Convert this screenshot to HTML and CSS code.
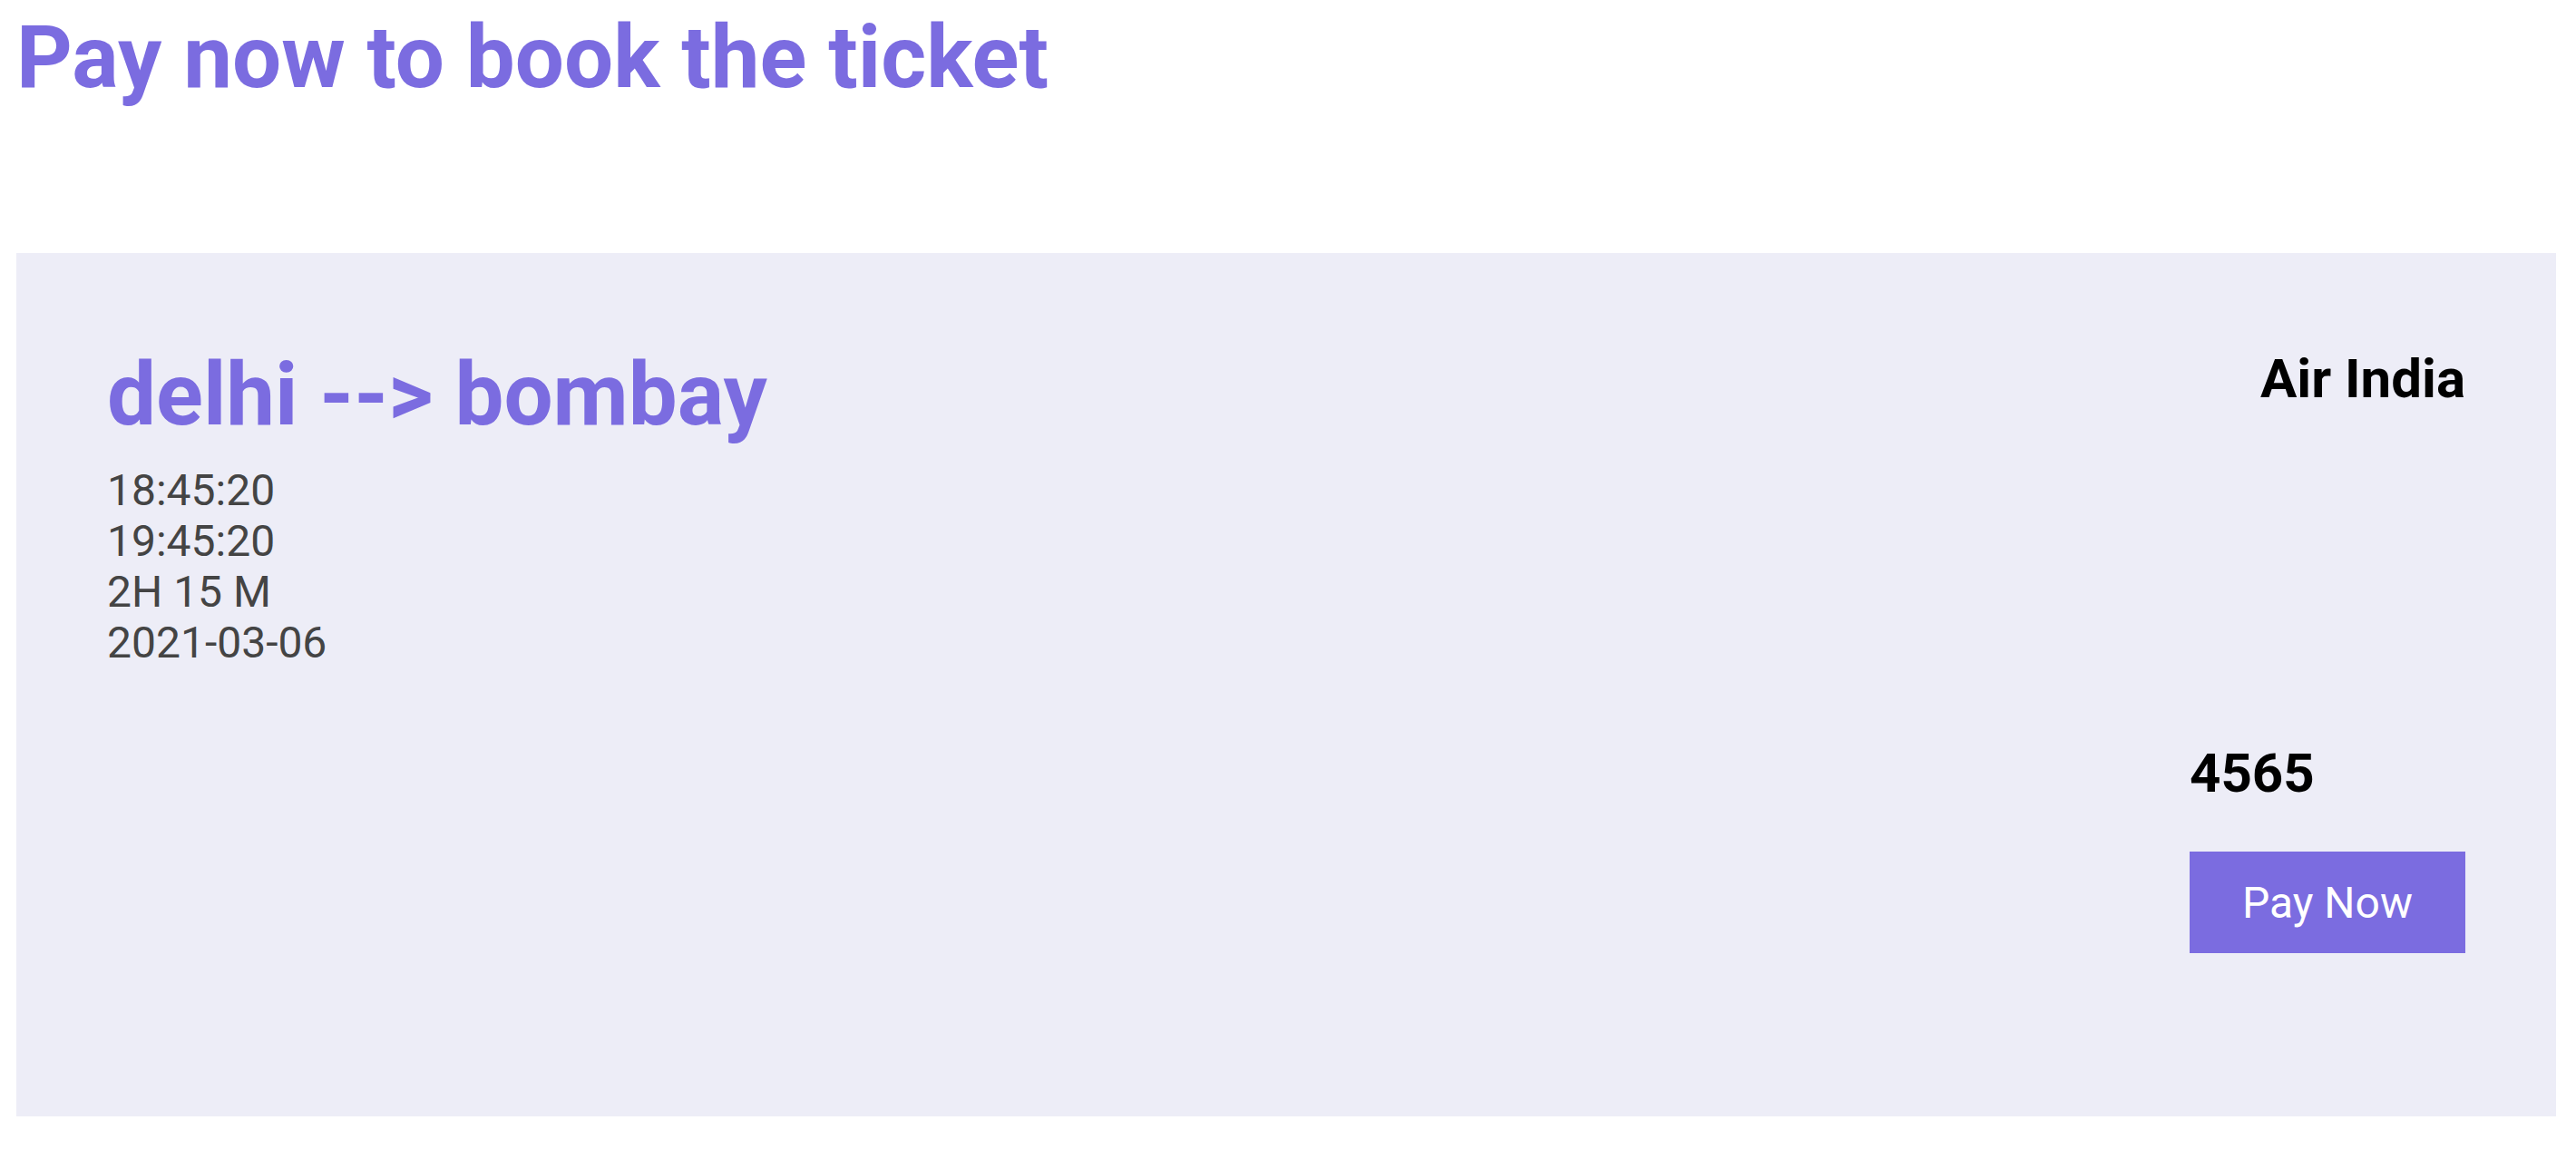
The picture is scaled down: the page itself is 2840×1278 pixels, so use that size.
FILE: index.html
```html
<!DOCTYPE html>
<html lang="en">
<head>
<meta charset="utf-8">
<title>Pay now to book the ticket</title>
<link rel="stylesheet" href="styles.css">
</head>
<body>
<main class="page">
  <h1 class="page-title">Pay now to book the ticket</h1>
  <section class="ticket">
    <div class="ticket-info">
      <h2 class="route">delhi --&gt; bombay</h2>
      <div class="details">
        <div>18:45:20</div>
        <div>19:45:20</div>
        <div>2H 15 M</div>
        <div>2021-03-06</div>
      </div>
    </div>
    <div class="ticket-side">
      <h3 class="airline">Air India</h3>
      <div class="fare">
        <h3 class="price">4565</h3>
        <button class="pay-btn" type="button">Pay Now</button>
      </div>
    </div>
  </section>
</main>
</body>
</html>
```

FILE: styles.css
```css
html, body {
  margin: 0;
  padding: 0;
  background: #ffffff;
}

body {
  font-family: Roboto, "Liberation Sans", Arial, sans-serif;
}

.page {
  padding: 0 22px 0 18px;
}

.page-title {
  margin: 7px 0 0 0;
  font-size: 96px;
  font-weight: 700;
  line-height: normal;
  color: #7b6ce0;
}

.ticket {
  margin-top: 160px;
  background: #ededf7;
  padding: 100px;
  display: flex;
  justify-content: space-between;
  align-items: flex-start;
}

.route {
  margin: 0 0 22px 0;
  font-size: 96px;
  font-weight: 700;
  line-height: normal;
  color: #7b6ce0;
}

.details {
  font-size: 48px;
  line-height: 56px;
  color: #444444;
}

.ticket-side {
  display: flex;
  flex-direction: column;
  align-items: flex-end;
}

.airline {
  margin: 4px 0 0 0;
  font-size: 60px;
  font-weight: 700;
  line-height: 70px;
  color: #000000;
}

.fare {
  margin-top: 365px;
  margin-bottom: 80px;
  display: flex;
  flex-direction: column;
  align-items: flex-start;
}

.price {
  margin: 0;
  font-size: 60px;
  font-weight: 700;
  line-height: 70px;
  color: #000000;
}

.pay-btn {
  margin-top: 51px;
  width: 304px;
  height: 112px;
  border: none;
  border-radius: 0;
  background: #7b6ce0;
  color: #ffffff;
  font-family: Roboto, "Liberation Sans", Arial, sans-serif;
  font-size: 48px;
  font-weight: 400;
  display: flex;
  align-items: center;
  justify-content: center;
  padding: 0;
  cursor: pointer;
}
```
